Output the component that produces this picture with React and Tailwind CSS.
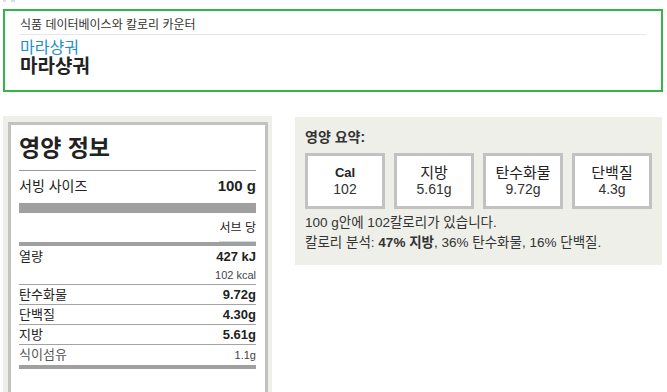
const font = { fontFamily: '"Liberation Sans", "Noto Sans CJK KR", sans-serif' }

const Row = ({ label, value, bold = true, muted = false, border = true }) => (
  <div
    className={`flex h-[20px] items-center justify-between ${border ? 'border-b border-[#a3a3a3]' : ''}`}
  >
    <span className={`text-[13px] ${muted ? 'text-[#555]' : 'text-[#222]'}`}>{label}</span>
    <span className={bold ? 'text-[13px] font-bold text-[#222]' : 'text-[11px] text-[#444]'}>{value}</span>
  </div>
)

const SummaryBox = ({ title, value, boldTitle = false }) => (
  <div className="flex h-[56px] w-[80px] flex-col items-center justify-center border-[3px] border-[#c2c2c2] bg-white">
    <div className={`leading-[17px] text-[#222] ${boldTitle ? 'text-[13px] font-bold' : 'text-[15px]'}`}>{title}</div>
    <div className="text-[14px] leading-[17px] text-[#333]">{value}</div>
  </div>
)

export default function App() {
  return (
    <div className="min-h-[392px] bg-white" style={font}>
      {/* clipped breadcrumb icon */}
      <div className="flex h-[9px] gap-[5px] pl-[3px]">
        <span className="h-[2px] w-[3px] bg-[#d6dce9]" />
        <span className="h-[2px] w-[4px] bg-[#d6dce9]" />
      </div>

      {/* Header card */}
      <div className="ml-[3px] h-[83px] w-[660px] border-2 border-[#38b34a] px-[15px] pt-[7px]">
        <div className="text-[12px] leading-[14px] text-[#333]">식품 데이터베이스와 칼로리 카운터</div>
        <div className="mt-[2px] border-b border-[#e5e7eb]" />
        <div className="mt-[5px] text-[16px] leading-[16px] text-[#1b8fc9]">마라샹궈</div>
        <div className="text-[19px] font-bold leading-[22px] text-[#222]">마라샹궈</div>
      </div>

      <div className="mt-[24px] flex items-start gap-[23px] pl-[3px]">
        {/* Nutrition facts label */}
        <div className="w-[269px] bg-[#eeefe9] pl-[5px] pr-[4px] pt-[6px]">
          <div className="border-[3px] border-[#c2c2c2] bg-white pb-[40px] pl-[8px] pr-[9px] pt-[9px]">
            <div className="text-[23px] font-bold leading-[28px] text-[#222]">영양 정보</div>
            <div className="mt-[8px] border-b border-[#999]" />
            <div className="flex h-[30px] items-center justify-between">
              <span className="text-[14px] text-[#222]">서빙 사이즈</span>
              <span className="text-[15px] font-bold text-[#222]">100 g</span>
            </div>
            <div className="mt-[2px] h-[10px] bg-[#a0a0a0]" />
            <div className="flex h-[29px] items-center justify-end">
              <span className="text-[12px] text-[#222]">서브 당</span>
            </div>
            <div className="relative h-[4px] bg-[#a0a0a0]">
              <div className="absolute -top-[1px] right-0 h-[1px] w-[37px] bg-[#c9dde6]" />
            </div>
            <div className="flex h-[21px] items-center justify-between">
              <span className="text-[13px] text-[#222]">열량</span>
              <span className="text-[13px] font-bold text-[#222]">427 kJ</span>
            </div>
            <div className="flex h-[18px] items-center justify-end border-b border-[#a3a3a3]">
              <span className="text-[11px] text-[#444]">102 kcal</span>
            </div>
            <Row label="탄수화물" value="9.72g" />
            <Row label="단백질" value="4.30g" />
            <Row label="지방" value="5.61g" />
            <Row label="식이섬유" value="1.1g" bold={false} muted border={false} />
            <div className="h-[4px] bg-[#a0a0a0]" />
          </div>
        </div>

        {/* Summary */}
        <div className="mt-[1px] w-[367px] bg-[#eeefe9] px-[10px] pb-[12px] pt-[12px]">
          <div className="text-[14px] font-bold leading-[16px] text-[#333]">영양 요약:</div>
          <div className="mt-[8px] flex gap-[9px]">
            <SummaryBox title="Cal" value="102" boldTitle />
            <SummaryBox title="지방" value="5.61g" />
            <SummaryBox title="탄수화물" value="9.72g" />
            <SummaryBox title="단백질" value="4.3g" />
          </div>
          <div className="mt-[4px] text-[13.5px] leading-[20px] text-[#333]">100 g안에 102칼로리가 있습니다.</div>
          <div className="text-[13.5px] leading-[20px] text-[#333]">
            칼로리 분석: <span className="font-bold">47% 지방</span>, 36% 탄수화물, 16% 단백질.
          </div>
        </div>
      </div>
    </div>
  )
}
